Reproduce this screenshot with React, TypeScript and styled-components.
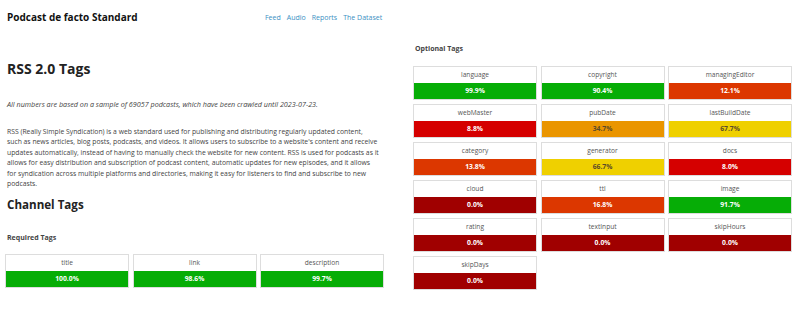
import React from "react";
import styled, { createGlobalStyle } from "styled-components";

const Global = createGlobalStyle`
  html, body { margin: 0; padding: 0; background: #fff; }
  body { font-family: "Open Sans", "Noto Sans", sans-serif; color: #333; }
`;

const Page = styled.div`
  width: 800px;
  height: 309px;
  overflow: hidden;
  padding: 0 8px 0 5px;
  box-sizing: border-box;
`;

const Header = styled.header`
  height: 34px;
  display: flex;
  align-items: center;
  padding-left: 2px;
`;

const Brand = styled.div`
  font-size: 10px;
  font-weight: 700;
  color: #111;
  width: 258px;
`;

const Nav = styled.nav`
  display: flex;
  gap: 6px;
`;

const NavLink = styled.a`
  font-size: 7px;
  color: #3a90c3;
  text-decoration: none;
`;

const Columns = styled.div`
  display: grid;
  grid-template-columns: 379px 379px;
  column-gap: 29px;
`;

const Col = styled.div`
  display: flex;
  flex-direction: column;
`;

const H1 = styled.h1`
  margin: 25px 0 0 2px;
  font-size: 14px;
  font-weight: 700;
  color: #222;
  line-height: 20px;
`;

const Note = styled.p`
  margin: 20.5px 0 0 2px;
  font-size: 7.2px;
  font-style: italic;
  color: #444;
  line-height: 9px;
`;

const Para = styled.p`
  margin: 18px 0 0 2px;
  width: 390px;
  font-size: 6.8px;
  color: #444;
  line-height: 10.6px;
`;

const H2 = styled.h2`
  margin: 6px 0 0 2px;
  font-size: 11.6px;
  font-weight: 700;
  color: #222;
  line-height: 18px;
`;

const H3 = styled.h3<{ $top: number }>`
  margin: ${(p) => p.$top}px 0 0 2px;
  font-size: 7px;
  font-weight: 700;
  color: #444;
  line-height: 12px;
`;

const Grid = styled.div<{ $top: number }>`
  margin-top: ${(p) => p.$top}px;
  display: grid;
  grid-template-columns: repeat(3, 1fr);
  column-gap: 3.5px;
  row-gap: 4px;
`;

const Card = styled.div`
  border: 1px solid #ddd;
  display: flex;
  flex-direction: column;
`;

const Label = styled.div`
  height: 16px;
  line-height: 16px;
  text-align: center;
  font-size: 6.6px;
  color: #555;
  background: #fff;
`;

const Bar = styled.div<{ $bg: string; $dark?: boolean }>`
  height: 16px;
  line-height: 16px;
  text-align: center;
  font-size: 6.8px;
  font-weight: 700;
  background: ${(p) => p.$bg};
  color: ${(p) => (p.$dark ? "#5a4a2a" : "#fff")};
`;

function colorFor(v: number): { bg: string; dark: boolean } {
  if (v >= 80) return { bg: "#06ad06", dark: false };
  if (v >= 50) return { bg: "#efd000", dark: true };
  if (v >= 25) return { bg: "#ea9500", dark: true };
  if (v >= 10) return { bg: "#dc3700", dark: false };
  if (v > 0) return { bg: "#d50000", dark: false };
  return { bg: "#a00000", dark: false };
}

const Tag = ({ name, value }: { name: string; value: number }) => {
  const c = colorFor(value);
  return (
    <Card>
      <Label>{name}</Label>
      <Bar $bg={c.bg} $dark={c.dark}>
        {value.toFixed(1)}%
      </Bar>
    </Card>
  );
};

const required: [string, number][] = [
  ["title", 100.0],
  ["link", 98.6],
  ["description", 99.7],
];

const optional: [string, number][] = [
  ["language", 99.9],
  ["copyright", 90.4],
  ["managingEditor", 12.1],
  ["webMaster", 8.8],
  ["pubDate", 34.7],
  ["lastBuildDate", 67.7],
  ["category", 13.8],
  ["generator", 66.7],
  ["docs", 8.0],
  ["cloud", 0.0],
  ["ttl", 16.8],
  ["image", 91.7],
  ["rating", 0.0],
  ["textInput", 0.0],
  ["skipHours", 0.0],
  ["skipDays", 0.0],
];

const paraLines = [
  "RSS (Really Simple Syndication) is a web standard used for publishing and distributing regularly updated content,",
  "such as news articles, blog posts, podcasts, and videos. It allows users to subscribe to a website's content and receive",
  "updates automatically, instead of having to manually check the website for new content. RSS is used for podcasts as it",
  "allows for easy distribution and subscription of podcast content, automatic updates for new episodes, and it allows",
  "for syndication across multiple platforms and directories, making it easy for listeners to find and subscribe to new",
  "podcasts.",
];

export default function App() {
  return (
    <Page>
      <Global />
      <Header>
        <Brand>Podcast de facto Standard</Brand>
        <Nav>
          <NavLink href="#">Feed</NavLink>
          <NavLink href="#">Audio</NavLink>
          <NavLink href="#">Reports</NavLink>
          <NavLink href="#">The Dataset</NavLink>
        </Nav>
      </Header>
      <Columns>
        <Col>
          <H1>RSS 2.0 Tags</H1>
          <Note>
            All numbers are based on a sample of 69057 podcasts, which have been crawled until 2023-07-23.
          </Note>
          <Para>
            {paraLines.map((l, i) => (
              <React.Fragment key={i}>
                {l}
                {i < paraLines.length - 1 && <br />}
              </React.Fragment>
            ))}
          </Para>
          <H2>Channel Tags</H2>
          <H3 $top={18}>Required Tags</H3>
          <Grid $top={10}>
            {required.map(([n, v]) => (
              <Tag key={n} name={n} value={v} />
            ))}
          </Grid>
        </Col>
        <Col>
          <H3 $top={9}>Optional Tags</H3>
          <Grid $top={11}>
            {optional.map(([n, v]) => (
              <Tag key={n} name={n} value={v} />
            ))}
          </Grid>
        </Col>
      </Columns>
    </Page>
  );
}
